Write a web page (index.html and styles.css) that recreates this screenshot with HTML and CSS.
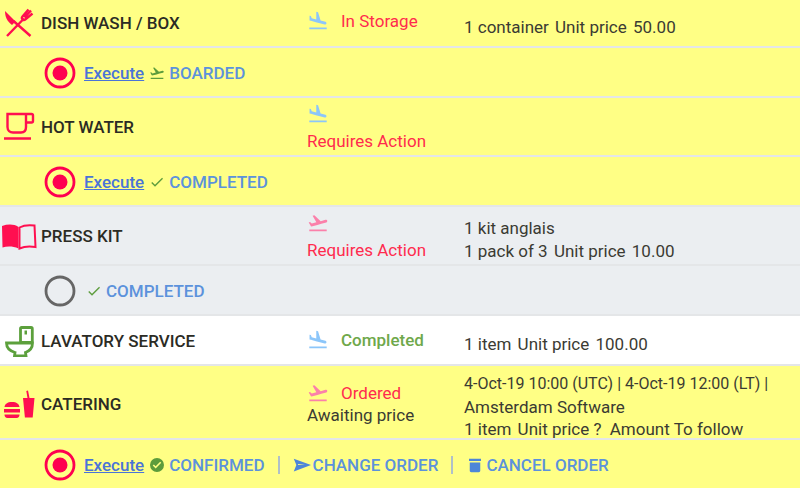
FILE: index.html
```html
<!DOCTYPE html>
<html lang="en">
<head>
<meta charset="utf-8">
<title>Services</title>
<link rel="stylesheet" href="styles.css">
</head>
<body>
<svg class="defs" width="0" height="0" aria-hidden="true">
  <symbol id="land" viewBox="0 0 24 24"><path d="M2.500 19h19v2h-19zm7.180-5.730l4.350 1.160 5.310 1.420c.8.210 1.620-.26 1.840-1.060.21-.8-.26-1.620-1.060-1.840l-5.310-1.420-2.760-9.020L10.120 2v8.280L5.150 8.950l-.93-2.320-1.450-.39v5.170l1.600.43 5.310 1.430z"/></symbol>
  <symbol id="takeoff" viewBox="0 0 24 24"><path d="M2.500 19h19v2h-19zm19.570-9.360c-.21-.8-1.040-1.280-1.840-1.060L14.920 10l-6.900-6.430-1.930.51 4.140 7.170-4.970 1.330-1.970-1.540-1.450.39 1.820 3.160.77 1.330 1.600-.43 5.310-1.420 4.350-1.160L21 11.490c.81-.23 1.280-1.050 1.070-1.850z"/></symbol>
  <symbol id="radio-on" viewBox="0 0 32 32"><circle cx="16" cy="16" r="14" fill="none" stroke="currentColor" stroke-width="2.800"/><circle cx="16" cy="16" r="7.500" fill="currentColor"/></symbol>
  <symbol id="radio-off" viewBox="0 0 32 32"><circle cx="16" cy="16" r="14" fill="none" stroke="currentColor" stroke-width="2.800"/></symbol>
  <symbol id="check" viewBox="0 0 24 24"><path d="M9 16.200L4.800 12l-1.400 1.400L9 19 21 7l-1.400-1.400z"/></symbol>
</svg>
<main class="list">
  <section class="row main first yellow">
    <div class="name">
      <svg class="cat" viewBox="0 0 32 32"><path class="red-f" d="M1 4l10.500 10.500-3.500 3.500C3 14.500 1 9.500 1 4z"/><path class="red-s" d="M9.500 14L26.500 29M3 29L20 11.500M24.500 2.500L18.500 9.500c-.8 1-.8 2 0 2.800s2 .8 3 0L28.500 6.500M27 3.500L20.500 10.500"/></svg>
      <span>DISH WASH / BOX</span>
    </div>
    <div class="status top"><div class="line"><svg class="plane blue"><use href="#land"/></svg><span class="label red">In Storage</span></div></div>
    <div class="details low"><p>1 container <span class="gap">Unit price</span> <span class="gap">50.00</span></p></div>
  </section>
  <section class="row sub yellow">
    <svg class="radio on"><use href="#radio-on"/></svg>
    <a class="exec" href="#">Execute</a>
    <svg class="tick green"><use href="#takeoff"/></svg>
    <span class="act">BOARDED</span>
  </section>

  <section class="row main mid yellow">
    <div class="name">
      <svg class="cat" viewBox="0 0 32 32"><path class="red-s" d="M3.500 3H22v13c0 3.500-2 5.500-5 5.500H9c-3 0-5.500-2-5.500-5.500zM22 3h5.500c1 0 1.500.5 1.500 1.500V10c0 1-.5 1.500-1.500 1.500H22M0 27.500h27"/></svg>
      <span>HOT WATER</span>
    </div>
    <div class="status"><svg class="plane blue"><use href="#land"/></svg><div class="label-line red">Requires Action</div></div>
    <div class="details"></div>
  </section>
  <section class="row sub yellow">
    <svg class="radio on"><use href="#radio-on"/></svg>
    <a class="exec" href="#">Execute</a>
    <svg class="tick green"><use href="#check"/></svg>
    <span class="act">COMPLETED</span>
  </section>

  <section class="row main mid grey">
    <div class="name">
      <svg class="cat wide" viewBox="0 0 36 28"><path class="red-b" d="M1 4c6-2 12-2 16.500 1v21.500C12 24 6 24 1.500 25.500z"/><path class="red-o" d="M18.500 5.500C23 3 28 2.800 33.500 3.500L34.500 25c-5.500-1-11-.8-16 1.500z"/></svg>
      <span>PRESS KIT</span>
    </div>
    <div class="status"><svg class="plane pink"><use href="#takeoff"/></svg><div class="label-line red">Requires Action</div></div>
    <div class="details"><p>1 kit anglais</p><p>1 pack of 3 <span class="gap">Unit price</span> <span class="gap">10.00</span></p></div>
  </section>
  <section class="row sub grey">
    <svg class="radio off"><use href="#radio-off"/></svg>
    <svg class="tick green plain"><use href="#check"/></svg>
    <span class="act">COMPLETED</span>
  </section>

  <section class="row main service white">
    <div class="name nudge">
      <svg class="cat" viewBox="0 0 32 32"><path class="green-s" d="M17.500 2.500h9.500c.8 0 1.300.5 1.300 1.300V17.500H16.500V3.500c0-.6.4-1 1-1zM2.500 18h26c0 4.500-3 8-7 9.500l.5 3.500H10.500l.5-3.500C6 26 2.500 23 2.500 18z"/><path class="green-f" d="M20.500 5.500h2.500v4h-2.500z"/></svg>
      <span>LAVATORY SERVICE</span>
    </div>
    <div class="status mid-top"><div class="line"><svg class="plane blue"><use href="#land"/></svg><span class="label ok">Completed</span></div></div>
    <div class="details lower"><p>1 item <span class="gap">Unit price</span> <span class="gap">100.00</span></p></div>
  </section>

  <section class="row main tall yellow">
    <div class="name nudge-s">
      <svg class="cat" viewBox="0 0 32 32"><path class="red-f" d="M.5 19c.3-3 3-5 7.500-5s7.200 2 7.500 5zM0 21h16v3.500H0zM.5 26.500h15c0 2-1 3.500-3 3.500h-9c-2 0-3-1.500-3-3.500zM19 10h11.500l-1.800 19.500h-7.800zM23.500 10L22.300 3l1.700-.4L25.500 10z"/></svg>
      <span>CATERING</span>
    </div>
    <div class="status low-top"><div class="line"><svg class="plane pink"><use href="#takeoff"/></svg><span class="label red">Ordered</span></div><div class="note">Awaiting price</div></div>
    <div class="details compact"><p class="date">4-Oct-19 10:00 (UTC) | 4-Oct-19 12:00 (LT) |</p><p>Amsterdam Software</p><p>1 item <span class="gap">Unit price ?</span> <span class="gap wide-gap">Amount To follow</span></p></div>
  </section>
  <section class="row sub yellow last">
    <svg class="radio on"><use href="#radio-on"/></svg>
    <a class="exec" href="#">Execute</a>
    <svg class="tick green" viewBox="0 0 24 24"><path d="M12 1.500a10.500 10.500 0 1 0 0 21 10.500 10.500 0 0 0 0-21zm-2 15.700l-4.400-4.400 1.700-1.700 2.700 2.700 6.700-6.700 1.700 1.700z"/></svg>
    <span class="act">CONFIRMED</span>
    <span class="sep"></span>
    <svg class="act-icon" viewBox="0 0 24 24"><path d="M1 3.500l23 8.500-23 8.500 3.500-8.500zm6 7.300l-.5 1.200H16z"/></svg>
    <span class="act">CHANGE ORDER</span>
    <span class="sep"></span>
    <svg class="act-icon" viewBox="0 0 24 24"><path d="M5 8.500h14v11c0 1-.8 2-2 2H7c-1.200 0-2-1-2-2zM4 3.500h16v3H4z"/></svg>
    <span class="act">CANCEL ORDER</span>
  </section>
</main>
</body>
</html>
```
FILE: styles.css
```css
* { box-sizing: border-box; }
html, body { margin: 0; padding: 0; }
body {
  width: 800px;
  height: 488px;
  overflow: hidden;
  background: #fff;
  font-family: Roboto, "Liberation Sans", sans-serif;
  font-size: 17px;
  color: #333;
}
.defs { position: absolute; }
p { margin: 0; }
.list { display: flex; flex-direction: column; }
.row { border-bottom: 2px solid #e4e6e8; }
.yellow { background: #ffff85; }
.grey { background: #ebeef1; }
.white { background: #fff; }
.main { display: grid; grid-template-columns: 307px 157px 1fr; }
.first { height: 48px; }
.mid { height: 59px; }
.service { height: 50px; }
.tall { height: 74px; }
.sub {
  height: 50px;
  display: flex;
  align-items: center;
  padding: 2px 0 0 44px;
  font-weight: 500;
}
.last { border-bottom: 0; height: 48px; padding-top: 2px; }
.name {
  display: flex;
  align-items: center;
  font-weight: 500;
  color: #2b2b24;
  white-space: nowrap;
}
.nudge { padding-top: 2px; }
.nudge-s { padding-top: 1px; }
.cat { width: 32px; height: 32px; margin: 0 5px 0 4px; flex: none; }
.cat.wide { width: 36px; margin: 0 4px 0 1px; }
.red-f, .red-b { fill: #ff0f50; }
.red-s { fill: none; stroke: #ff0f50; stroke-width: 2.400; }
.red-o { fill: none; stroke: #ff0f50; stroke-width: 2; }
.green-s { fill: none; stroke: #5ca03c; stroke-width: 2.800; }
.green-f { fill: #5ca03c; }
.status { padding-top: 5px; display: flex; flex-direction: column; align-items: flex-start; }
.line { display: flex; align-items: center; }
.status.top { padding-top: 10px; }
.status.mid-top { padding-top: 13px; }
.status.low-top { padding-top: 16px; }
.plane { width: 22px; height: 22px; flex: none; }
.blue { fill: #8cc6fa; }
.pink { fill: #fb80aa; }
.label { margin-left: 12px; font-weight: 400; }
.label-line { margin-top: 6px; font-weight: 400; }
.red { color: #ff2b4e; }
.ok { color: #6fa84b; font-weight: 500; }
.note { color: #3b3b33; margin-top: 1px; }
.details {
  padding-top: 8px;
  line-height: 22.500px;
  color: #3b3b33;
  display: flex;
  flex-direction: column;
  justify-content: center;
}
.low { padding-top: 8px; }
.lower { padding-top: 9px; }
.compact { padding-top: 7px; }
.date { font-size: 16px; }
.gap { margin-left: 2px; }
.wide-gap { margin-left: 4px; }
.radio { width: 32px; height: 32px; flex: none; }
.on { color: #ff0050; }
.off { color: #666; }
.exec { margin-left: 8px; color: #4a74d8; text-decoration: underline; }
.tick { width: 16px; height: 16px; margin: 0 4px 0 5px; flex: none; }
.plain { margin-left: 10px; }
.green { fill: #5c9c3c; }
.act { color: #5c92dc; white-space: nowrap; }
.act-icon { width: 18px; height: 18px; fill: #4e86d8; flex: none; margin-right: 2px; }
.sep { width: 2px; height: 18px; background: #b0c0c8; margin: 0 13px; flex: none; }
```
